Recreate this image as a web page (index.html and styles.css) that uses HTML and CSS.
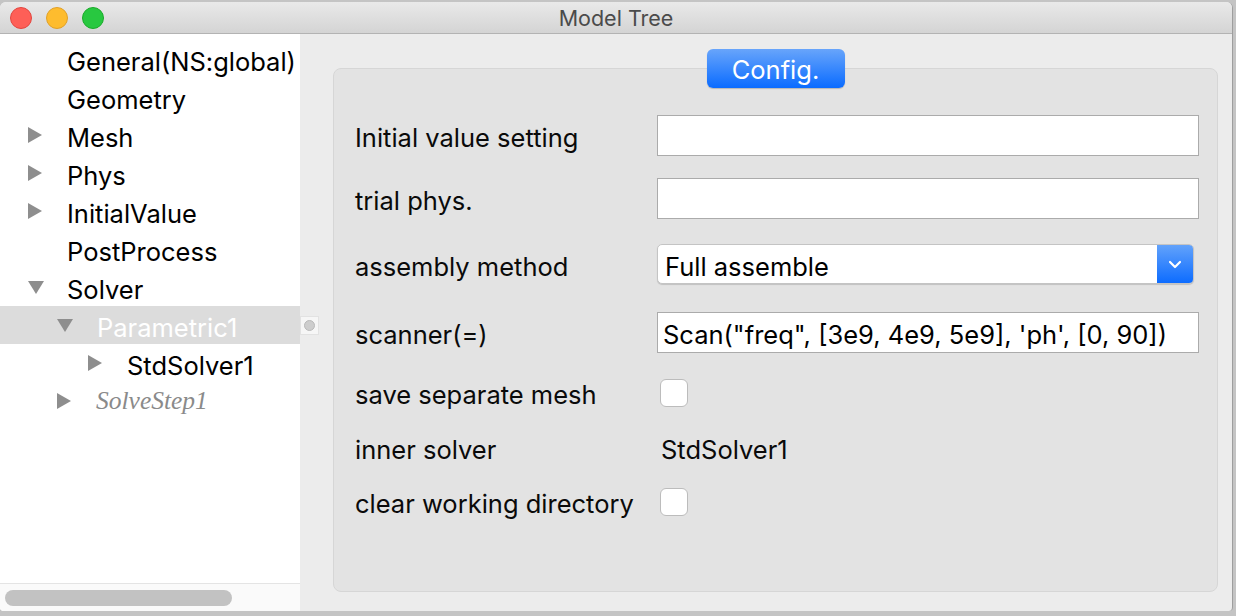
FILE: index.html
```html
<!DOCTYPE html>
<html>
<head>
<meta charset="utf-8">
<link rel="stylesheet" href="styles.css">
</head>
<body>
<div class="window">
  <div class="titlebar">
    <div class="lights">
      <span class="light red"></span>
      <span class="light yellow"></span>
      <span class="light green"></span>
    </div>
    <div class="title">Model Tree</div>
    <div class="spacer"></div>
  </div>
  <div class="main">
    <div class="tree">
      <div class="rows">
        <div class="node l1"><span class="twisty"></span><span class="label">General(NS:global)</span></div>
        <div class="node l1"><span class="twisty"></span><span class="label">Geometry</span></div>
        <div class="node l1"><span class="twisty"><svg width="14" height="16" viewBox="0 0 14 16"><polygon points="0,0 14,8 0,16" fill="#8e8e8e"/></svg></span><span class="label">Mesh</span></div>
        <div class="node l1"><span class="twisty"><svg width="14" height="16" viewBox="0 0 14 16"><polygon points="0,0 14,8 0,16" fill="#8e8e8e"/></svg></span><span class="label">Phys</span></div>
        <div class="node l1"><span class="twisty"><svg width="14" height="16" viewBox="0 0 14 16"><polygon points="0,0 14,8 0,16" fill="#8e8e8e"/></svg></span><span class="label">InitialValue</span></div>
        <div class="node l1"><span class="twisty"></span><span class="label">PostProcess</span></div>
        <div class="node l1"><span class="twisty"><svg width="16" height="13" viewBox="0 0 16 13"><polygon points="0,0 16,0 8,13" fill="#8e8e8e"/></svg></span><span class="label">Solver</span></div>
        <div class="node l2 selected"><span class="twisty"><svg width="16" height="13" viewBox="0 0 16 13"><polygon points="0,0 16,0 8,13" fill="#8e8e8e"/></svg></span><span class="label">Parametric1</span></div>
        <div class="node l3"><span class="twisty"><svg width="14" height="16" viewBox="0 0 14 16"><polygon points="0,0 14,8 0,16" fill="#8e8e8e"/></svg></span><span class="label">StdSolver1</span></div>
        <div class="node l2 disabled"><span class="twisty"><svg width="14" height="16" viewBox="0 0 14 16"><polygon points="0,0 14,8 0,16" fill="#8e8e8e"/></svg></span><span class="label">SolveStep1</span></div>
      </div>
      <div class="hscroll"><div class="thumb"></div></div>
    </div>
    <div class="content">
      <div class="handle"><span class="dot"></span></div>
      <div class="group">
        <div class="config-btn">Config.</div>
        <div class="form">
          <div class="row r1"><div class="flabel">Initial value setting</div><div class="input"></div></div>
          <div class="row r2"><div class="flabel">trial phys.</div><div class="input"></div></div>
          <div class="row r3"><div class="flabel">assembly method</div>
            <div class="select"><span class="sel-text">Full assemble</span><span class="sel-btn"><svg width="14" height="9" viewBox="0 0 14 9"><polyline points="2,2 7,7 12,2" fill="none" stroke="#fff" stroke-width="2.2" stroke-linecap="round" stroke-linejoin="round"/></svg></span></div>
          </div>
          <div class="row r4"><div class="flabel">scanner(=)</div><div class="input"><span class="in-text">Scan("freq", [3e9, 4e9, 5e9], 'ph', [0, 90])</span></div></div>
          <div class="row r5 check-row"><div class="flabel">save separate mesh</div><div class="cb-wrap"><span class="checkbox"></span></div></div>
          <div class="row r6 check-row"><div class="flabel">inner solver</div><div class="value">StdSolver1</div></div>
          <div class="row r7 check-row"><div class="flabel">clear working directory</div><div class="cb-wrap"><span class="checkbox"></span></div></div>
        </div>
      </div>
    </div>
  </div>
</div>
</body>
</html>
```

FILE: styles.css
```css
html, body {
  margin: 0;
  padding: 0;
}
body {
  width: 1236px;
  height: 616px;
  overflow: hidden;
  background: #c4c4c4;
  font-family: "Inter", "Liberation Sans", sans-serif;
  color: #111;
}
.window {
  margin-top: 2px;
  width: 1232px;
  height: 609px;
  border-right: 1px solid #9e9e9e;
  border-radius: 6px 6px 4px 4px;
  overflow: hidden;
  display: flex;
  flex-direction: column;
  background: #ececec;
}
.titlebar {
  height: 31px;
  flex: none;
  border-bottom: 1px solid #b3b3b3;
  background: linear-gradient(#e9e9e9, #d4d4d4);
  display: grid;
  grid-template-columns: 1fr auto 1fr;
  align-items: center;
}
.lights {
  display: flex;
  gap: 14px;
  padding-left: 10px;
  padding-top: 1px;
}
.light {
  width: 22px;
  height: 22px;
  border-radius: 50%;
  box-sizing: border-box;
}
.red { background: #fe5f57; border: 1px solid #e2463f; }
.yellow { background: #febc2e; border: 1px solid #e0a028; }
.green { background: #28c840; border: 1px solid #1aab29; }
.title {
  font-size: 21.5px;
  color: #4b4b4b;
  padding-top: 1px;
}
.main {
  flex: 1;
  display: flex;
  min-height: 0;
}
.tree {
  width: 300px;
  flex: none;
  background: #fff;
  display: flex;
  flex-direction: column;
}
.rows {
  flex: 1;
  padding-top: 6px;
}
.node {
  height: 38px;
  display: flex;
  align-items: center;
  font-size: 25.5px;
  color: #000;
  white-space: nowrap;
}
.node .label {
  padding-top: 4px;
}
.l1 { padding-left: 28px; }
.l2 { padding-left: 57px; }
.l3 { padding-left: 88px; }
.twisty {
  width: 39px;
  flex: none;
  display: flex;
  align-items: center;
}
.l2 .twisty { width: 40px; }
.twisty svg { display: block; }
.selected {
  background: #dcdcdc;
}
.selected .label { color: #fff; }
.disabled .label {
  font-family: "Liberation Serif", serif;
  font-style: italic;
  color: #8a8a8a;
  font-size: 25.5px;
  padding-top: 0;
}
.disabled .twisty { width: 39px; }
.hscroll {
  height: 27px;
  flex: none;
  border-top: 1px solid #e4e4e4;
  background: #fafafa;
  display: flex;
  align-items: center;
  padding-left: 5px;
}
.thumb {
  width: 227px;
  height: 16px;
  border-radius: 8px;
  background: #c2c2c2;
}
.content {
  flex: 1;
  position: relative;
  display: flex;
  padding: 34px 14px 19px 33px;
}
.handle {
  position: absolute;
  left: 0;
  top: 282px;
  width: 17px;
  height: 17px;
  background: #f6f6f6;
  border: 1px solid #e2e2e2;
  display: flex;
  align-items: center;
  justify-content: center;
}
.dot {
  width: 9px;
  height: 9px;
  border-radius: 50%;
  background: #cdcdcd;
  border: 1px solid #b9b9b9;
}
.group {
  flex: 1;
  position: relative;
  background: #e3e3e3;
  border: 1px solid #d6d6d6;
  border-radius: 8px;
  padding: 46px 18px 0 21px;
}
.config-btn {
  position: absolute;
  top: -20px;
  left: 50%;
  transform: translateX(-50%);
  width: 138px;
  height: 39px;
  border-radius: 6px;
  background: linear-gradient(#68a5fb, #0a6bff);
  box-shadow: 0 1px 1px rgba(0,0,0,0.2);
  color: #fff;
  font-size: 25.5px;
  display: flex;
  align-items: center;
  justify-content: center;
  padding-top: 2px;
  box-sizing: border-box;
}
.form {
  display: flex;
  flex-direction: column;
}
.row {
  display: flex;
  align-items: flex-start;
}
.flabel {
  width: 302px;
  flex: none;
  height: 41px;
  line-height: 45px;
  font-size: 25.5px;
  color: #0a0a0a;
  white-space: nowrap;
}
.r1 { height: 63px; }
.r2 { height: 66px; }
.r3 { height: 68px; }
.r4 { height: 67px; }
.r5 { height: 55px; }
.r6 { height: 54px; }
.r7 { height: 28px; }
.check-row .flabel {
  height: 28px;
  line-height: 32px;
}
.input {
  width: 542px;
  height: 41px;
  box-sizing: border-box;
  background: #fff;
  border: 1px solid #ababab;
  display: flex;
  align-items: center;
  padding-left: 5px;
  font-size: 25.5px;
  color: #000;
  white-space: nowrap;
  overflow: hidden;
}
.in-text {
  padding-top: 4px;
}
.select {
  width: 537px;
  height: 40px;
  box-sizing: border-box;
  background: #fff;
  border: 1px solid #c4c4c4;
  border-radius: 5px;
  box-shadow: 0 1px 1px rgba(0,0,0,0.15);
  display: flex;
  align-items: center;
  overflow: hidden;
}
.sel-text {
  flex: 1;
  padding-left: 7px;
  padding-top: 4px;
  font-size: 25.5px;
  color: #000;
}
.sel-btn {
  width: 36px;
  height: 100%;
  background: linear-gradient(#62a2fb, #0d6cff);
  display: flex;
  align-items: center;
  justify-content: center;
}
.cb-wrap {
  padding-left: 3px;
}
.checkbox {
  display: block;
  width: 28px;
  height: 28px;
  box-sizing: border-box;
  background: #fff;
  border: 1px solid #bcbcbc;
  border-radius: 6px;
}
.value {
  height: 28px;
  line-height: 32px;
  padding-left: 4px;
  font-size: 25.5px;
  color: #0a0a0a;
}
```
